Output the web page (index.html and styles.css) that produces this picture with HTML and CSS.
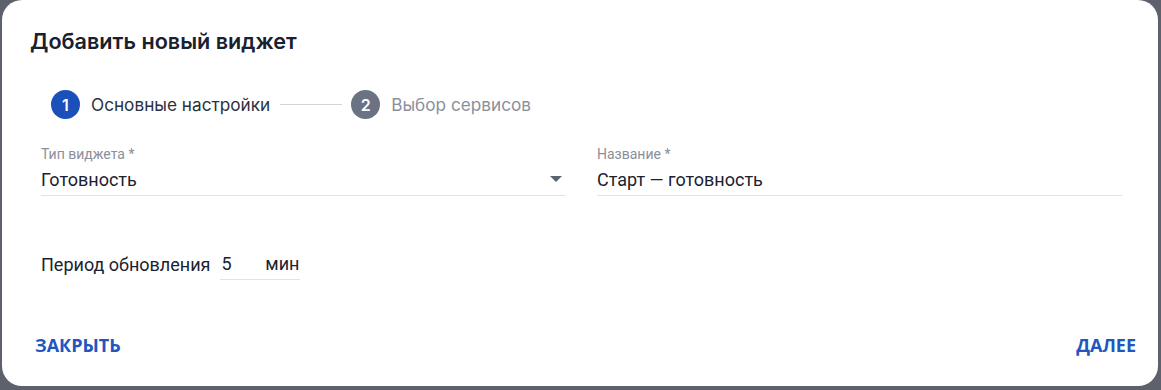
FILE: index.html
```html
<html>

<head>
  <link rel="stylesheet" href="styles.css">
</head>

<body>
  <div class="dialog">
    <h1 class="dialog-title">Добавить новый виджет</h1>

    <div class="stepper">
      <div class="step step-active">
        <span class="step-num">1</span>
        <span class="step-label">Основные настройки</span>
      </div>
      <div class="step-line"></div>
      <div class="step">
        <span class="step-num">2</span>
        <span class="step-label">Выбор сервисов</span>
      </div>
    </div>

    <div class="fields">
      <div class="field">
        <div class="field-label">Тип виджета *</div>
        <div class="field-input">
          <span>Готовность</span>
          <span class="select-arrow"></span>
        </div>
      </div>
      <div class="field">
        <div class="field-label">Название *</div>
        <div class="field-input">
          <span>Старт — готовность</span>
        </div>
      </div>
    </div>

    <div class="period">
      <span>Период обновления</span>
      <div class="period-input">
        <span>5</span>
        <span class="period-unit">мин</span>
      </div>
    </div>

    <div class="actions">
      <button class="text-button">Закрыть</button>
      <button class="text-button">Далее</button>
    </div>
  </div>
</body>

</html>
```

FILE: styles.css
```css
html,
body {
  margin: 0;
  height: 100%;
}

body {
  background-color: #5d616c;
  font-family: Roboto, "Noto Sans", sans-serif;
  overflow: hidden;
}

.dialog {
  box-sizing: border-box;
  margin-left: 2px;
  width: 1156px;
  height: 386px;
  background-color: #ffffff;
  border-radius: 20px;
  padding: 27px 22px 0 28px;
  display: flex;
  flex-direction: column;
}

.dialog-title {
  margin: 0;
  font-family: Inter, Roboto, sans-serif;
  font-size: 21.6px;
  font-weight: 600;
  color: #19202e;
  line-height: 28px;
}

.stepper {
  display: flex;
  align-items: center;
  margin-top: 35px;
  margin-left: 21px;
}

.step {
  display: flex;
  align-items: center;
  font-family: Inter, Roboto, sans-serif;
  font-size: 17.2px;
  color: #8a909d;
}

.step-num {
  width: 29px;
  height: 29px;
  border-radius: 50%;
  background-color: #6a7284;
  color: #ffffff;
  font-size: 16px;
  font-weight: 600;
  display: flex;
  align-items: center;
  justify-content: center;
  margin-right: 11px;
}

.step-active {
  color: #2a3140;
}

.step-active .step-num {
  background-color: #1b4fba;
}

.step-line {
  width: 62px;
  height: 1px;
  background-color: #d3d5da;
  margin: 0 9px 0 10px;
}

.fields {
  display: flex;
  gap: 31px;
  margin-top: 26px;
  margin-left: 11px;
  margin-right: 14px;
}

.field {
  flex: 1;
}

.field-label {
  font-size: 14px;
  color: #8a8f9b;
  line-height: 18px;
}

.field-input {
  display: flex;
  align-items: center;
  justify-content: space-between;
  height: 32px;
  font-size: 18px;
  color: #1b2130;
  border-bottom: 1px solid #e1e3e6;
}

.select-arrow {
  width: 0;
  height: 0;
  border-left: 6px solid transparent;
  border-right: 6px solid transparent;
  border-top: 6px solid #5b6271;
  margin-right: 4px;
}

.period {
  display: flex;
  align-items: center;
  margin-top: 52px;
  margin-left: 11px;
  font-size: 18px;
  color: #1b2130;
}

.period-input {
  display: flex;
  justify-content: space-between;
  box-sizing: border-box;
  width: 80px;
  height: 32px;
  padding: 0 1px 0 1px;
  margin-left: 10px;
  align-items: center;
  border-bottom: 1px solid #e1e3e6;
}

.actions {
  display: flex;
  justify-content: space-between;
  margin-top: auto;
  margin-bottom: 25px;
  margin-left: -1px;
  margin-right: -6px;
}

.text-button {
  background: none;
  border: none;
  padding: 4px 6px;
  font-family: "Open Sans", Inter, sans-serif;
  font-size: 18px;
  font-weight: 700;
  text-transform: uppercase;
  color: #2056be;
  cursor: pointer;
}
```
